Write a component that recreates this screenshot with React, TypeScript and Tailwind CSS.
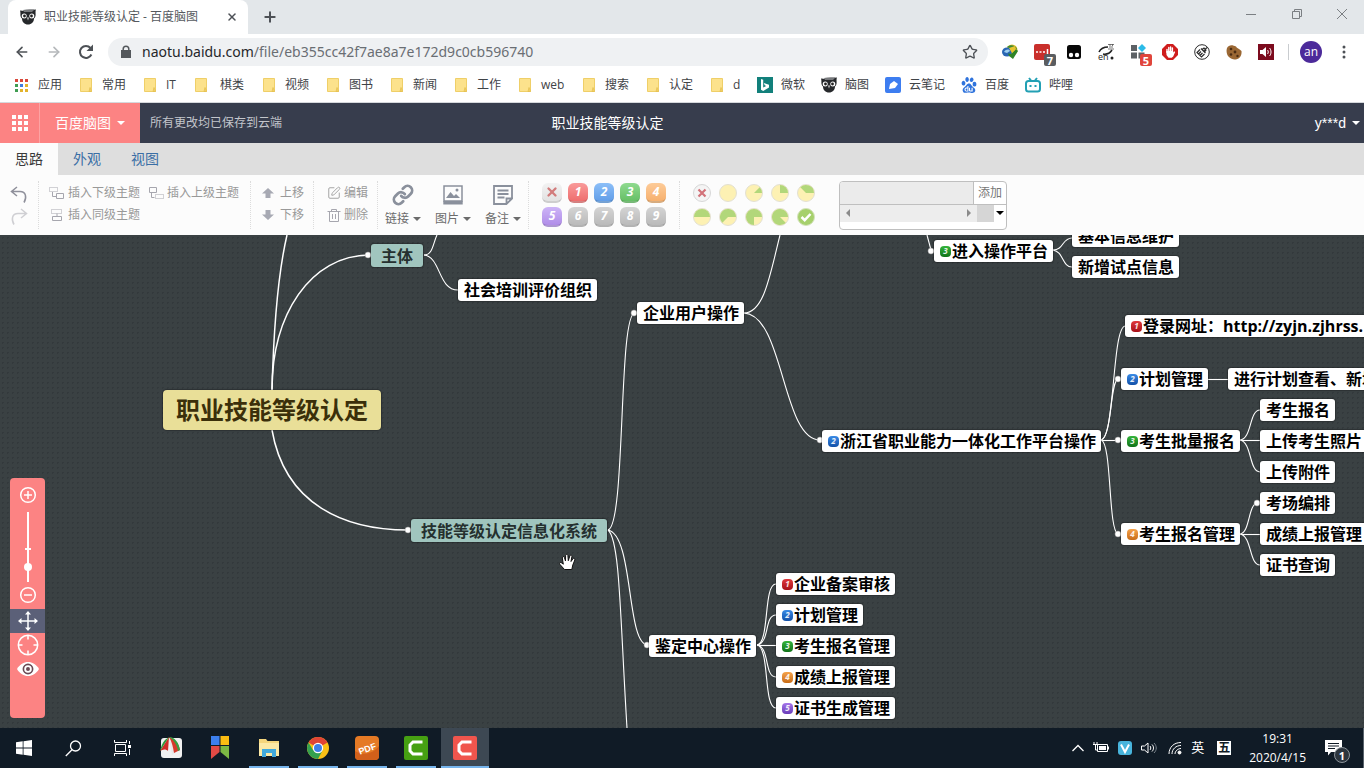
import React from "react";
import {
  ArrowLeft,
  ArrowRight,
  Plus,
  X,
  Star,
  Lock,
  Link,
  SquarePen,
} from "lucide-react";
import { SiBaidu } from "react-icons/si";

/* ---------- small shared drawings ---------- */

function Owl({ className }: { className?: string }) {
  return (
    <svg viewBox="0 0 16 16" className={className} aria-hidden="true">
      <path d="M0 1.500C3 2 5 2.200 8 1.600C11 1 13 1 16 .5C15.400 2 15.600 3 15.600 5C15.800 7 15 8.500 14 9.500C14 13 11.500 15.500 8 15.500C4.500 15.500 2 13 2 9.500C1 8.500.2 7 .4 5C.5 3.500.3 2.500 0 1.500Z" fill="#26282b" />
      <path d="M3 1C7 0 11 0 14.500.6L12 3L4 3Z" fill="#77797c" />
      <circle cx="4.200" cy="7" r="2.500" fill="#fff" />
      <circle cx="11.800" cy="7" r="2.500" fill="#fff" />
      <circle cx="4.500" cy="7" r="1.400" fill="#222" />
      <circle cx="11.500" cy="7" r="1.400" fill="#222" />
      <path d="M7 8.500h2l-1 3z" fill="#ddd" />
    </svg>
  );
}

function Folder() {
  return (
    <svg viewBox="0 0 12 14" className="h-[14px] w-3 shrink-0" aria-hidden="true">
      <path d="M.5.5h11v13H.5z" fill="#fce28c" stroke="#efcf68" />
      <path d="M9 13.500l1-4 1.500 4z" fill="#f6d56e" stroke="#e2bd4d" strokeWidth=".7" />
    </svg>
  );
}

function Caret() {
  return (
    <svg viewBox="0 0 8 4" className="h-1 w-2" aria-hidden="true">
      <path d="M0 0h8L4 4z" fill="currentColor" />
    </svg>
  );
}

/* ---------- browser chrome ---------- */

function TabStrip() {
  return (
    <div className="flex h-[34px] shrink-0 items-stretch bg-[#e3e7ea] pl-2">
      <div className="flex w-60 items-center rounded-t-lg bg-white pl-3 pr-2">
        <Owl className="h-4 w-4" />
        <span className="ml-2 flex-1 truncate text-xs text-[#55595e]">职业技能等级认定 - 百度脑图</span>
        <button aria-label="关闭标签页" className="flex h-4 w-4 items-center justify-center text-[#4d5156]">
          <X className="h-3 w-3" strokeWidth={3} />
        </button>
      </div>
      <button aria-label="新标签页" className="ml-3 flex w-5 items-center justify-center text-[#4d5156]">
        <Plus className="h-4 w-4" strokeWidth={3} />
      </button>
      <div className="ml-auto flex pb-[6px] text-[#7b7f83]">
        <button aria-label="最小化" className="flex w-[46px] items-center justify-center">
          <svg viewBox="0 0 10 10" className="h-[10px] w-[10px]"><path d="M0 5.500h10" stroke="currentColor" /></svg>
        </button>
        <button aria-label="还原" className="flex w-[46px] items-center justify-center">
          <svg viewBox="0 0 10 10" className="h-[10px] w-[10px]" fill="none" stroke="currentColor">
            <path d="M.5 2.500h7v7h-7zM2.500 2.500v-2h7v7h-2" />
          </svg>
        </button>
        <button aria-label="关闭" className="flex w-11 items-center justify-center">
          <svg viewBox="0 0 10 10" className="h-[10px] w-[10px]"><path d="M0 0l10 10M10 0L0 10" stroke="currentColor" /></svg>
        </button>
      </div>
    </div>
  );
}

function Extensions() {
  return (
    <div className="ml-[14px] flex items-center gap-4">
      <button aria-label="下载器">
        <svg viewBox="0 0 16 16" className="h-4 w-4">
          <circle cx="10" cy="6" r="5.500" fill="#e8c32e" />
          <path d="M5 3c3-3 9-2 10 2l-4 1z" fill="#3d8a35" />
          <ellipse cx="5" cy="8" rx="5" ry="4.500" fill="#2a66b4" />
          <path d="M2 8c2-3 5-3 6-1l-3 2z" fill="#9fd0ef" />
          <path d="M6 9.500l3 .500L14 5l2 2-5 8-4-3z" fill="#2f8428" />
          <path d="M7 4l6-2 1 3-4 4z" fill="#e8c32e" />
        </svg>
      </button>
      <button aria-label="密码" className="relative">
        <svg viewBox="0 0 16 16" className="h-4 w-4">
          <rect width="16" height="16" rx="2" fill="#c92f2b" />
          <path d="M2 8h2M5.500 8h2M9 8h2M13.500 5v5" stroke="#fff" strokeWidth="1.500" />
        </svg>
        <span className="absolute -right-[6px] top-[10px] flex h-3 w-3 items-center justify-center rounded-xs bg-[#5a5d60] text-[11px] font-bold leading-none text-white">7</span>
      </button>
      <button aria-label="脚本管理">
        <svg viewBox="0 0 16 16" className="h-4 w-4">
          <rect x="1" y="1" width="14" height="14" rx="2.500" fill="#080808" />
          <circle cx="5" cy="11" r="2.200" fill="#fff" />
          <circle cx="11" cy="11" r="2.200" fill="#fff" />
        </svg>
      </button>
      <button aria-label="翻译" className="relative">
        <svg viewBox="0 0 16 16" className="h-4 w-4">
          <path d="M1 8c2-4 5-5 9-5M5 10c5 1 7-1 9-4" stroke="#222" strokeWidth="1.600" fill="none" />
          <path d="M10 .5h6M12 0v2M14.500 0v2M11 3h4M10 5h6" stroke="#555" strokeWidth=".8" />
          <circle cx="14" cy="14" r="1.500" fill="#222" />
        </svg>
        <span className="absolute left-0 top-2 text-[9px] leading-[10px] text-[#222]">en</span>
      </button>
      <button aria-label="扩展管理" className="relative">
        <svg viewBox="0 0 16 16" className="h-4 w-4">
          <path d="M1 1h6v6H1zM1 8.500h6v6H1zM8.500 8.500h6v6h-6z" fill="#5d6165" />
          <path d="M12 0l4 4-4 4-4-4z" fill="#2bbbe8" />
        </svg>
        <span className="absolute -right-[6px] top-[10px] flex h-3 w-3 items-center justify-center rounded-xs bg-[#e0453c] text-[11px] font-bold leading-none text-white">5</span>
      </button>
      <button aria-label="广告拦截">
        <svg viewBox="0 0 16 16" className="h-4 w-4">
          <path d="M5 0h6l5 5v6l-5 5H5l-5-5V5z" fill="#cf1d1d" />
          <path d="M5 8.500V5.500M6.800 8V3.500M8.600 8V3M10.400 8V4" stroke="#fff" strokeWidth="1.400" strokeLinecap="round" />
          <path d="M4.300 7h6.800l.3 1.500 1-1.200.8.700-2 4.500-1.500 1.200H6.500L4.500 11z" fill="#fff" />
        </svg>
      </button>
      <button aria-label="清理">
        <svg viewBox="0 0 16 16" className="h-4 w-4" fill="none" stroke="#2c2c2c">
          <circle cx="8" cy="8" r="7.300" />
          <path d="M13 3.500L10 6.500M7 4.500l4.500 4.500M6 5.500l-3 3 4.500 4.500 3-3M4.500 10l2.500-2.500M6 11.500l2.500-2.500M8 5.500l2-1.500 2 2-1.500 2" strokeWidth="1.200" />
        </svg>
      </button>
      <button aria-label="Cookie">
        <svg viewBox="0 0 16 16" className="h-4 w-4">
          <path d="M1 4C3 0 7 1 10 2.500c1 2 3 2 5.500 4.500.5 5-2 8-6 8.500C4 16-1 11 1 4z" fill="#9a6733" />
          <circle cx="5" cy="5" r="1.300" fill="#4a2c12" />
          <circle cx="9" cy="8" r="1.400" fill="#4a2c12" />
          <circle cx="5" cy="10.500" r="1.300" fill="#4a2c12" />
          <circle cx="11.500" cy="12" r="1.200" fill="#4a2c12" />
        </svg>
      </button>
      <button aria-label="音量">
        <svg viewBox="0 0 16 16" className="h-4 w-4">
          <path d="M0 0h16v16H0z" fill="#7c0b1e" />
          <path d="M2 6h2.500L8 3v10L4.500 10H2z" fill="#fff" />
          <path d="M9.500 6c1 1 1 3 0 4M11.500 4c2 2 2 6 0 8" stroke="#fff" fill="none" />
        </svg>
      </button>
    </div>
  );
}

function AddressBar() {
  return (
    <div className="flex h-9 shrink-0 items-center bg-white pl-[14px] pr-[18px]">
      <button aria-label="后退" className="text-[#4d5156]"><ArrowLeft className="h-4 w-4" strokeWidth={2.5} /></button>
      <button aria-label="前进" className="ml-4 text-[#b5b8bb]"><ArrowRight className="h-4 w-4" strokeWidth={2.5} /></button>
      <button aria-label="刷新" className="ml-4 text-[#4d5156]">
        <svg viewBox="0 0 16 16" className="h-4 w-4" fill="none">
          <path d="M13.400 10.500A6 6 0 1 1 12.500 4" stroke="currentColor" strokeWidth="2" />
          <path d="M15 .5v6.500H8.500z" fill="currentColor" />
        </svg>
      </button>
      <div className="ml-[14px] flex h-7 flex-1 items-center rounded-full bg-[#eff1f3] pl-3 pr-[10px]">
        <svg viewBox="0 0 12 14" className="h-[14px] w-3" aria-hidden="true">
          <path d="M1 5h10v8H1z" fill="#54585c" />
          <path d="M3.200 5.500V4a2.800 2.800 0 0 1 5.600 0v1.500" fill="none" stroke="#54585c" strokeWidth="1.500" />
        </svg>
        <div className="ml-[10px] flex-1 font-['Noto_Sans',sans-serif] text-sm text-[#6a6e73]">
          <span className="text-[#25272a]">naotu.baidu.com</span>/file/eb355cc42f7ae8a7e172d9c0cb596740
        </div>
        <button aria-label="收藏" className="text-[#4d5156]"><Star className="h-4 w-4" strokeWidth={2} /></button>
      </div>
      <Extensions />
      <div className="ml-[14px] h-4 w-px bg-[#c9cccf]" />
      <button aria-label="账户" className="ml-[11px] flex h-[22px] w-[22px] items-center justify-center rounded-full bg-[#4c2a9a] text-xs text-white">an</button>
      <button aria-label="菜单" className="ml-5 text-[#4d5156]">
        <svg viewBox="0 0 4 14" className="h-[14px] w-1" fill="currentColor">
          <circle cx="2" cy="2" r="1.500" /><circle cx="2" cy="7" r="1.500" /><circle cx="2" cy="12" r="1.500" />
        </svg>
      </button>
    </div>
  );
}

const APP_DOTS = ["#d9483b", "#d9483b", "#d9483b", "#3f9d52", "#3f7de0", "#e3b32c", "#3f9d52", "#e3b32c", "#e3b32c"];

function AppsIcon() {
  return (
    <svg viewBox="0 0 13 13" className="h-[13px] w-[13px]" aria-hidden="true">
      {APP_DOTS.map((c, i) => (
        <rect key={i} x={(i % 3) * 5} y={Math.floor(i / 3) * 5} width="3" height="3" fill={c} />
      ))}
    </svg>
  );
}

function Bookmark({ icon, label, width, gap }: { icon: React.ReactNode; label: string; width: string; gap: string }) {
  return (
    <a href="#" className={`flex shrink-0 items-center text-xs text-[#3f4347] ${width} ${gap}`}>
      {icon}
      {label}
    </a>
  );
}

function BookmarkBar() {
  return (
    <nav className="flex h-[33px] shrink-0 items-center border-b border-[#d5d8dc] bg-white pl-[15px] pb-[2px]">
      <Bookmark icon={<AppsIcon />} label="应用" width="w-[65px]" gap="gap-[10px]" />
      <Bookmark icon={<Folder />} label="常用" width="w-16" gap="gap-[10px]" />
      <Bookmark icon={<Folder />} label="IT" width="w-[51px]" gap="gap-[10px]" />
      <Bookmark icon={<Folder />} label="棋类" width="w-[68px]" gap="gap-[13px]" />
      {["视频", "图书", "新闻", "工作", "web", "搜索", "认定"].map((t) => (
        <Bookmark key={t} icon={<Folder />} label={t} width="w-16" gap="gap-[10px]" />
      ))}
      <Bookmark icon={<Folder />} label="d" width="w-[46px]" gap="gap-[10px]" />
      <Bookmark
        label="微软"
        width="w-16"
        gap="gap-2"
        icon={
          <svg viewBox="0 0 16 16" className="h-4 w-4">
            <path d="M0 0h16v16H0z" fill="#12807b" />
            <path d="M4 2l2.200.8v7.800l3-1.700-1.500-.7-.9-2.300 5.200 1.900v2.600L6.200 14 4 12.700z" fill="#fff" />
          </svg>
        }
      />
      <Bookmark icon={<Owl className="h-4 w-4" />} label="脑图" width="w-16" gap="gap-2" />
      <Bookmark
        label="云笔记"
        width="w-[76px]"
        gap="gap-2"
        icon={
          <svg viewBox="0 0 16 16" className="h-4 w-4">
            <rect width="16" height="16" rx="2" fill="#3d7df0" />
            <path d="M4 12l1-5 4-3 4 3-3 4z" fill="#fff" />
          </svg>
        }
      />
      <Bookmark icon={<SiBaidu className="h-4 w-4 text-[#2f73dc]" />} label="百度" width="w-16" gap="gap-2" />
      <Bookmark
        label="哔哩"
        width="w-16"
        gap="gap-2"
        icon={
          <svg viewBox="0 0 16 16" className="h-4 w-4" fill="none" stroke="#23a0b4" strokeWidth="2">
            <rect x="1" y="4" width="14" height="10.500" rx="2.500" />
            <path d="M4 1l2 2.500M12 1l-2 2.500M5.500 8v2M10.500 8v2" />
          </svg>
        }
      />
    </nav>
  );
}

/* ---------- application header ---------- */

function AppHeader() {
  return (
    <header className="grid h-10 shrink-0 grid-cols-[1fr_auto_1fr_149px] items-stretch bg-[#373d4d] text-white">
      <div className="flex items-stretch">
        <button aria-label="应用列表" className="flex w-10 items-center justify-center border-r border-[#fda3a3] bg-[#fc8383]">
          <svg viewBox="0 0 16 16" className="h-4 w-4" fill="#fff">
            {[0, 1, 2].map((r) => [0, 1, 2].map((c) => <rect key={`${r}${c}`} x={c * 6} y={r * 6} width="4" height="4" />))}
          </svg>
        </button>
        <button className="flex w-[100px] items-center justify-center gap-[6px] bg-[#fc8383] text-sm">
          百度脑图 <Caret />
        </button>
        <span className="flex items-center pl-[10px] text-xs text-[#c3c6cc]">所有更改均已保存到云端</span>
      </div>
      <h1 className="flex items-center text-sm">职业技能等级认定</h1>
      <div />
      <div className="flex items-center justify-end pr-1">
        <button className="flex items-center gap-[6px] font-['Liberation_Sans',sans-serif] text-sm">y***d <Caret /></button>
      </div>
    </header>
  );
}

function ModeTabs() {
  return (
    <nav className="flex h-8 shrink-0 bg-[#dedede] text-sm text-[#3a6ea5]">
      <a href="#" className="flex w-[58px] items-center justify-center bg-[#fcfcfc] text-[#3a3a3a]">思路</a>
      <a href="#" className="flex w-[58px] items-center justify-center">外观</a>
      <a href="#" className="flex w-[58px] items-center justify-center">视图</a>
    </nav>
  );
}

/* ---------- ribbon ---------- */

const LEVEL_SOLID = {
  child: "M7.500 7.500h7v5h-7zM3.500 6v4.500h4",
  parent: "M1.500 1.500h7v5h-7zM3.500 7v4.500h3",
  sibling: "M3.500 8.500h9v4h-9zM8 5.500v3",
};
const LEVEL_DASHED = { child: "M.5 1.500h8v4h-8z", parent: "M7.500 8.500h8v4h-8z", sibling: "M2.500 1.500h10v4h-10z" };

function LevelButton({ kind, label }: { kind: "child" | "parent" | "sibling"; label: string }) {
  return (
    <button className="flex h-[22px] items-center gap-[3px] text-xs text-[#999]">
      <svg viewBox="0 0 16 14" className="h-[14px] w-4" fill="none" stroke="#a6a6ae">
        <path d={LEVEL_SOLID[kind]} />
        <path d={LEVEL_DASHED[kind]} strokeDasharray="1 1" />
      </svg>
      {label}
    </button>
  );
}

function MoveButton({ up, label }: { up?: boolean; label: string }) {
  return (
    <button className="flex h-[22px] items-center gap-[6px] text-xs text-[#999]">
      <svg viewBox="0 0 12 12" className="h-3 w-3" fill="#a7a9b3">
        <path d={up ? "M6 1l6 5.500H8.500V11h-5V6.500H0z" : "M6 11l6-5.500H8.500V1h-5v4.500H0z"} />
      </svg>
      {label}
    </button>
  );
}

function BigButton({ label, children }: { label: string; children: React.ReactNode }) {
  return (
    <button className="flex w-[50px] flex-col items-center gap-1 pt-1 text-xs text-[#6b6b6b]">
      <span className="flex h-6 items-center text-[#8a909c]">{children}</span>
      <span className="flex items-center gap-1">{label} <Caret /></span>
    </button>
  );
}

const PRIORITY = [
  "from-[#f3f3f3] to-[#e2e2e2] text-[#d27c7c]",
  "from-[#f99a9a] to-[#ee6e6e] text-white",
  "from-[#8cbff8] to-[#629ee8] text-white",
  "from-[#8fda8f] to-[#66bf66] text-white",
  "from-[#fdcb98] to-[#f6b06e] text-white",
  "from-[#cdb4f7] to-[#b08de8] text-white",
  "from-[#d4d4d4] to-[#bababa] text-white",
  "from-[#d4d4d4] to-[#bababa] text-white",
  "from-[#d4d4d4] to-[#bababa] text-white",
  "from-[#d4d4d4] to-[#bababa] text-white",
];

function PriorityGrid() {
  return (
    <div className="grid grid-cols-5 gap-x-[6px] gap-y-1">
      {PRIORITY.map((tone, i) => (
        <button
          key={i}
          aria-label={i ? `优先级 ${i}` : "移除优先级"}
          className={`flex h-5 w-5 items-center justify-center rounded-md border-b-2 border-black/15 bg-linear-to-b text-xs font-bold italic ${tone}`}
        >
          {i ? i : <X className="h-[14px] w-[14px]" strokeWidth={4} />}
        </button>
      ))}
    </div>
  );
}

/* A clockwise slice that covers `fraction` of the dial and ends at three o'clock. */
function slice(fraction: number) {
  const start = Math.PI / 2 - fraction * Math.PI * 2;
  const x = 10 + 8 * Math.sin(start);
  const y = 10 - 8 * Math.cos(start);
  return `M10 10L${x} ${y}A8 8 0 ${fraction > 0.5 ? 1 : 0} 1 18 10Z`;
}

function ProgressGrid() {
  return (
    <div className="grid grid-cols-5 gap-x-[6px] gap-y-1">
      <button aria-label="移除进度">
        <svg viewBox="0 0 20 20" className="h-5 w-5">
          <circle cx="10" cy="10" r="8.500" fill="#f4f4f4" stroke="#d7d7d7" />
          <path d="M6.500 6.500l7 7M13.500 6.500l-7 7" stroke="#d27279" strokeWidth="2.200" />
        </svg>
      </button>
      {[0, 1, 2, 3, 4, 5, 6, 7].map((n) => (
        <button key={n} aria-label={`进度 ${n}/8`}>
          <svg viewBox="0 0 20 20" className="h-5 w-5">
            <circle cx="10" cy="10" r="8.500" fill="#fdf1b3" stroke="#e3e0d2" />
            {n > 0 && <path d={slice(n / 8)} fill="#b2d77a" />}
          </svg>
        </button>
      ))}
      <button aria-label="已完成">
        <svg viewBox="0 0 20 20" className="h-5 w-5">
          <circle cx="10" cy="10" r="8.500" fill="#a6d06c" stroke="#d5e3bd" />
          <path d="M5.500 10l3.200 3.200L14.500 7" stroke="#fff" strokeWidth="2.500" fill="none" />
        </svg>
      </button>
    </div>
  );
}

function ResourceBox() {
  return (
    <div className="w-[168px] overflow-hidden rounded-sm border border-[#bfbfbf] bg-white">
      <div className="flex h-[23px] border-b border-[#bfbfbf]">
        <input aria-label="资源标签" className="w-[134px] border-r border-[#bfbfbf] bg-[#ebebeb] px-1 text-xs" />
        <button className="flex-1 text-xs text-[#777]">添加</button>
      </div>
      <div className="flex h-[17px]">
        <div className="flex flex-1 items-center justify-between bg-[#ededed] px-[6px] text-[#8b8b8b]">
          <svg viewBox="0 0 4 8" className="h-2 w-1" fill="currentColor"><path d="M4 0v8L0 4z" /></svg>
          <svg viewBox="0 0 4 8" className="h-2 w-1" fill="currentColor"><path d="M0 0v8l4-4z" /></svg>
        </div>
        <div className="w-[17px] bg-[#d6d6d6]" />
        <button aria-label="更多资源" className="flex w-3 items-center justify-center text-black"><Caret /></button>
      </div>
      <div className="h-[7px]" />
    </div>
  );
}

function Divider() {
  return <div className="my-[6px] border-l border-dotted border-[#dcdcdc]" />;
}

function Ribbon() {
  return (
    <div className="flex h-[60px] shrink-0 bg-[#fcfcfc]">
      <div className="flex w-[38px] flex-col items-center justify-center gap-[2px] pt-[2px] text-[#8f909b]">
        <button aria-label="撤销">
          <svg viewBox="0 0 18 20" className="h-5 w-[18px]" fill="none" stroke="currentColor" strokeWidth="1.500">
            <path d="M7 2L1.500 6.500 7 11M1.500 6.500H10c6 0 7 6 4 11" />
          </svg>
        </button>
        <button aria-label="重做" className="text-[#cfcfd3]">
          <svg viewBox="0 0 18 20" className="h-5 w-[18px]" fill="none" stroke="currentColor" strokeWidth="1.500">
            <path d="M11 2l5.500 4.500L11 11M16.500 6.500H8c-6 0-7 6-4 11" />
          </svg>
        </button>
      </div>
      <Divider />
      <div className="flex w-[211px] flex-col justify-center pl-[10px] pb-[2px]">
        <div className="flex gap-2">
          <LevelButton kind="child" label="插入下级主题" />
          <LevelButton kind="parent" label="插入上级主题" />
        </div>
        <LevelButton kind="sibling" label="插入同级主题" />
      </div>
      <Divider />
      <div className="flex w-[62px] flex-col justify-center pl-[11px] pb-[2px]">
        <MoveButton up label="上移" />
        <MoveButton label="下移" />
      </div>
      <Divider />
      <div className="flex w-[63px] flex-col justify-center pl-[13px] pb-[2px] text-xs text-[#999]">
        <button className="flex h-[22px] items-center gap-[3px]"><SquarePen className="h-[14px] w-[14px]" strokeWidth={1.5} />编辑</button>
        <button className="flex h-[22px] items-center gap-[3px]">
          <svg viewBox="0 0 14 14" className="h-[14px] w-[14px]" fill="none" stroke="#a6a6ae">
            <path d="M.5 3.500h13M4.500 3.500v-2h5v2M2.500 3.500v10h9v-10M5.500 6v5M8.500 6v5" />
          </svg>
          删除
        </button>
      </div>
      <Divider />
      <div className="flex w-[150px] pt-1">
        <BigButton label="链接"><Link className="h-[22px] w-[22px]" strokeWidth={3} /></BigButton>
        <BigButton label="图片">
          <svg viewBox="0 0 20 20" className="h-5 w-5">
            <path d="M1 1h18v15H1z" fill="none" stroke="currentColor" strokeWidth="1.500" />
            <path d="M.3 16h19.400v3.500H.3zM3 13l4.500-6 3.500 4 2-2 4 4z" fill="currentColor" />
            <circle cx="14" cy="5" r="1.500" fill="currentColor" />
          </svg>
        </BigButton>
        <BigButton label="备注">
          <svg viewBox="0 0 20 20" className="h-5 w-5" fill="none" stroke="currentColor" strokeWidth="2">
            <path d="M19 14V1H1v18h13M19 13.500L13.500 19v-5.500z" strokeWidth="1.800" />
            <path d="M4.500 5.500h11M4.500 9h11M4.500 12.500h7" />
          </svg>
        </BigButton>
      </div>
      <Divider />
      <div className="flex w-[150px] items-center pl-[13px]"><PriorityGrid /></div>
      <Divider />
      <div className="flex w-[147px] items-center pl-[12px]"><ProgressGrid /></div>
      <div className="flex items-center pl-[12px]"><ResourceBox /></div>
    </div>
  );
}

/* ---------- mind map ---------- */

type MapNode = { x: number; y: number; text: string; mark?: number; kind?: "root" | "main"; wide?: boolean };

const NODES: MapNode[] = [
  { x: 163, y: 155, text: "职业技能等级认定", kind: "root" },
  { x: 371, y: 9, text: "主体", kind: "main" },
  { x: 411, y: 284, text: "技能等级认定信息化系统", kind: "main" },
  { x: 458, y: 44, text: "社会培训评价组织" },
  { x: 637, y: 67, text: "企业用户操作" },
  { x: 649, y: 400, text: "鉴定中心操作" },
  { x: 822, y: 195, text: "浙江省职业能力一体化工作平台操作", mark: 2 },
  { x: 934, y: 5, text: "进入操作平台", mark: 3 },
  { x: 1072, y: -10, text: "基本信息维护" },
  { x: 1072, y: 21, text: "新增试点信息" },
  { x: 1125, y: 80, text: "登录网址：http://zyjn.zjhrss.", mark: 1, wide: true },
  { x: 1121, y: 133, text: "计划管理", mark: 2 },
  { x: 1228, y: 133, text: "进行计划查看、新增", wide: true },
  { x: 1121, y: 195, text: "考生批量报名", mark: 3 },
  { x: 1121, y: 288, text: "考生报名管理", mark: 4 },
  { x: 1260, y: 164, text: "考生报名" },
  { x: 1260, y: 195, text: "上传考生照片" },
  { x: 1260, y: 226, text: "上传附件" },
  { x: 1260, y: 257, text: "考场编排" },
  { x: 1260, y: 288, text: "成绩上报管理" },
  { x: 1260, y: 319, text: "证书查询" },
  { x: 776, y: 338, text: "企业备案审核", mark: 1 },
  { x: 776, y: 369, text: "计划管理", mark: 2 },
  { x: 776, y: 400, text: "考生报名管理", mark: 3 },
  { x: 776, y: 431, text: "成绩上报管理", mark: 4 },
  { x: 776, y: 462, text: "证书生成管理", mark: 5 },
];

const MARK_TONE = [
  "",
  "from-[#e0383c] to-[#a80f18]",
  "from-[#3a8be6] to-[#1250a8]",
  "from-[#35b53c] to-[#107218]",
  "from-[#f5a34a] to-[#c86c14]",
  "from-[#a676ea] to-[#6a3cb8]",
];

const NODE_STYLE = {
  root: "h-10 px-[13px] text-2xl bg-[#e9df98] text-[#3b2f0a] rounded-sm",
  main: "h-[23px] px-[10px] text-base bg-[#a0c5be] text-[#25302f] rounded-[3px]",
  leaf: "h-[22px] pl-[6px] pr-[5px] text-base bg-white text-black rounded-[3px]",
};

const THICK = [
  "M272 155C274 80 280 30 287 0",
  "M272 155C272 80 310 20 370 20",
  "M272 195C285 270 345 295 408 295",
];

const THIN = [
  "M424 20C433 20 433 8 437 0",
  "M424 20C441 22 438 55 458 55",
  "M608 295C626 290 618 78 635 78",
  "M608 295C634 300 626 410 648 410",
  "M608 295C620 305 620 380 627 493",
  "M744 78C764 78 770 40 780 0",
  "M744 78C784 80 782 205 820 205",
  "M927 0L931 15",
  "M1053 15C1064 15 1062 3 1072 3",
  "M1053 15C1064 17 1062 32 1072 32",
  "M1101 205C1115 203 1112 93 1125 91",
  "M1101 205C1112 203 1110 146 1118 144",
  "M1101 205.500H1118",
  "M1101 205C1112 207 1108 296 1118 299",
  "M1208 144.500H1228",
  "M1240 205C1252 204 1249 175 1260 175",
  "M1240 205.500H1260",
  "M1240 205C1252 207 1249 237 1260 237",
  "M1240 299C1250 298 1248 270 1257 268",
  "M1240 299.500H1260",
  "M1240 299C1252 301 1249 330 1260 330",
  "M757 410C770 408 763 349 776 349",
  "M757 410C770 408 764 380 776 380",
  "M757 410.500H776",
  "M757 410C770 412 764 442 776 442",
  "M757 410C770 412 763 473 776 473",
];

const DOTS = [
  [368, 20], [408, 295], [634, 78], [647, 410], [820, 205], [931, 16],
  [1118, 144], [1118, 205], [1118, 299], [1257, 268],
];

function NodeBox({ node }: { node: MapNode }) {
  return (
    <div
      className={`absolute flex items-center gap-px whitespace-nowrap font-bold shadow-[0_0_1px_1px_rgba(0,0,0,0.25)] ${NODE_STYLE[node.kind ?? "leaf"]} ${node.wide ? "min-w-60" : ""}`}
      style={{ left: node.x, top: node.y }}
    >
      {node.mark && (
        <span className={`flex h-[11px] w-[11px] items-center justify-center rounded-sm bg-linear-to-b text-[8px] italic leading-none text-white/90 ${MARK_TONE[node.mark]}`}>
          {node.mark}
        </span>
      )}
      <span>{node.text}</span>
    </div>
  );
}

function ZoomPanel() {
  return (
    <div className="absolute left-[10px] top-[243px] flex h-60 w-[35px] flex-col items-center rounded-sm bg-[#fc8383] pt-2 text-white">
      <button aria-label="放大" className="h-[18px]">
        <svg viewBox="0 0 18 18" className="h-[18px] w-[18px]" fill="none" stroke="currentColor" strokeWidth="1.500">
          <circle cx="9" cy="9" r="7.300" /><path d="M5 9h8M9 5v8" />
        </svg>
      </button>
      <svg viewBox="0 0 10 72" className="mt-2 h-[72px] w-[10px]" fill="currentColor" role="img" aria-label="缩放比例">
        <path d="M4 0h2v70H4zM2 36h6v2H2z" /><circle cx="5" cy="55" r="4" />
      </svg>
      <button aria-label="缩小" className="mt-[2px] h-[18px]">
        <svg viewBox="0 0 18 18" className="h-[18px] w-[18px]" fill="none" stroke="currentColor" strokeWidth="1.500">
          <circle cx="9" cy="9" r="7.300" /><path d="M5 9h8" />
        </svg>
      </button>
      <button aria-label="拖动画布" className="mt-[5px] flex h-6 w-full items-center justify-center bg-[#5b6078]">
        <svg viewBox="0 0 20 20" className="h-5 w-5" fill="none" stroke="currentColor" strokeWidth="1.500">
          <path d="M10 1v18M1 10h18" />
          <path d="M10 0l3 3.500H7zM10 20l3-3.500H7zM0 10l3.500-3v6zM20 10l-3.500-3v6z" fill="currentColor" stroke="none" />
        </svg>
      </button>
      <button aria-label="定位中心" className="mt-px">
        <svg viewBox="0 0 20 20" className="h-[22px] w-[22px]" fill="none" stroke="currentColor" strokeWidth="1.400">
          <circle cx="10" cy="10" r="8.800" /><path d="M10 1v4M10 15v4M1 10h4M15 10h4" />
        </svg>
      </button>
      <button aria-label="预览" className="mt-[2px]">
        <svg viewBox="0 0 20 20" className="h-[22px] w-[22px]">
          <path d="M0 10C5 1.500 15 1.500 20 10 15 18.500 5 18.500 0 10z" fill="#fff" />
          <circle cx="10" cy="10" r="4.200" fill="#fff" stroke="#6b4a55" strokeWidth="1.500" />
          <circle cx="10" cy="10" r="1.800" fill="#6b4a55" />
        </svg>
      </button>
    </div>
  );
}

function HandCursor() {
  return (
    <svg viewBox="0 0 18 18" className="absolute left-[559px] top-[318px] h-[18px] w-[18px]" aria-hidden="true">
      <path
        d="M5.500 16.500L1 11.500C-.3 9.800 1.300 8.800 2.800 10l1.500 1.200L3.300 5C3 3.200 4.900 2.900 5.400 4.500L6.500 8 6.600 2.500C6.700.9 8.700.9 8.900 2.500L9.300 7.700 10.800 3C11.300 1.500 13.200 2 12.900 3.600L12 8.500l1.900-2.700c1-1.300 2.500-.3 1.900 1.200L13.800 12l-1 4.500z"
        fill="#fff"
        stroke="#111"
        strokeWidth="1"
      />
    </svg>
  );
}

function MindMap() {
  return (
    <main className="relative min-h-0 flex-1 overflow-hidden bg-[#3a4143] bg-[radial-gradient(circle,#33393c_1px,transparent_1px)] bg-[size:5px_5px]">
      <svg className="absolute inset-0 h-full w-full" fill="none" stroke="#fff" aria-hidden="true">
        {THICK.map((d) => <path key={d} d={d} strokeWidth="1.500" />)}
        {THIN.map((d) => <path key={d} d={d} strokeWidth="1.100" />)}
        {DOTS.map(([x, y]) => <circle key={`${x}-${y}`} cx={x} cy={y} r="3" fill="#fff" stroke="#999" strokeWidth=".5" />)}
      </svg>
      {NODES.map((n) => <NodeBox key={`${n.x}-${n.y}`} node={n} />)}
      <ZoomPanel />
      <HandCursor />
    </main>
  );
}

/* ---------- taskbar ---------- */

function TaskItem({ label, open, active, children }: { label: string; open?: boolean; active?: boolean; children: React.ReactNode }) {
  return (
    <button aria-label={label} className={`flex w-12 flex-col items-center justify-between ${active ? "bg-[#3d4853]" : ""}`}>
      <span className="flex flex-1 items-center pt-[2px]">{children}</span>
      <span className={`h-[2px] ${active ? "w-full" : "w-10"} ${open ? "bg-[#76b4ec]" : ""}`} />
    </button>
  );
}

function Taskbar() {
  return (
    <footer className="flex h-10 shrink-0 items-stretch bg-[#101b26] text-white">
      <div className="flex gap-px">
        <TaskItem label="开始">
          <svg viewBox="0 0 16 16" className="h-4 w-4" fill="#fff"><path d="M0 2.300l6.700-1v6.300H0zM7.500 1.200L16 0v7.600H7.500zM0 8.400h6.700v6.300L0 13.700zM7.500 8.400H16V16l-8.500-1.200z" /></svg>
        </TaskItem>
        <TaskItem label="搜索">
          <svg viewBox="0 0 17 17" className="h-[17px] w-[17px]" fill="none" stroke="#fff" strokeWidth="1.300"><circle cx="10.500" cy="6" r="5" /><path d="M7 9.700L.8 16" /></svg>
        </TaskItem>
        <TaskItem label="任务视图">
          <svg viewBox="0 0 17 16" className="h-4 w-[17px]" fill="none" stroke="#fff"><path d="M.5 0v2.500h12V0M1.500 4.500h10v7h-10zM.5 16v-2.500h12V16M15.500 1v3M15.500 9v6" /><path d="M14 5h3v3h-3z" fill="#fff" stroke="none" /></svg>
        </TaskItem>
        <TaskItem label="录屏工具">
          <svg viewBox="0 0 22 22" className="h-[22px] w-[22px]">
            <rect x="1" y="1" width="21" height="20" rx="3" fill="#f1f1f1" />
            <path d="M9 0L0 14c3-2 6-2 8 0z" fill="#cf2e26" />
            <path d="M9 0L5 3C2 6 1 10 0 14z" fill="#2f9a3a" />
            <path d="M9 1c1 6 2 12 3 17l4-3z" fill="#e9e9e9" />
            <path d="M9 0c3 5 4 10 5 16l6-3C19 7 15 2 9 0z" fill="#d63a2c" />
            <path d="M9 0c6 0 10 6 11 13l-2 1C17 8 14 3 9 0z" fill="#36a043" />
          </svg>
        </TaskItem>
        <TaskItem label="书签工具">
          <svg viewBox="0 0 18 24" className="h-6 w-[18px]"><path d="M0 0h8.500v9H0z" fill="#3d80ee" /><path d="M9.500 0H18v9H9.500z" fill="#fbbc12" /><path d="M0 10h8.500v6L0 23z" fill="#e24a45" /><path d="M9.500 10H18v13l-8.500-7z" fill="#7cb844" /></svg>
        </TaskItem>
        <TaskItem label="文件资源管理器" open>
          <svg viewBox="0 0 22 20" className="h-5 w-[22px]"><path d="M1 1h7l1.500 2H21v15H1z" fill="#f5d67c" /><path d="M1 5h20v13H1z" fill="#fce9a5" /><path d="M4 11h14v8h-4v-4H8v4H4z" fill="#41a9dc" /></svg>
        </TaskItem>
        <TaskItem label="Chrome" open>
          <svg viewBox="0 0 22 22" className="h-[22px] w-[22px]">
            <circle cx="11" cy="11" r="11" fill="#fbc116" />
            <path d="M11 11L1.500 5.500A11 11 0 0 1 20.500 5.500z" fill="#e04436" />
            <path d="M1.500 5.500A11 11 0 0 0 11 22l4.500-8.500L6 13z" fill="#34a04f" />
            <circle cx="11" cy="11" r="5.200" fill="#fff" /><circle cx="11" cy="11" r="4" fill="#3f7fe8" />
          </svg>
        </TaskItem>
        <TaskItem label="PDF 编辑器" open>
          <svg viewBox="0 0 24 24" className="h-6 w-6"><rect width="24" height="24" rx="4" fill="#e57a25" /><path d="M0 15C8 20 18 18 24 10v10a4 4 0 0 1-4 4H4a4 4 0 0 1-4-4z" fill="#d2601a" /><text x="3" y="16" fontSize="9" fontWeight="bold" fontFamily="Liberation Sans, sans-serif" fill="#fff" transform="rotate(-20 12 12)">PDF</text></svg>
        </TaskItem>
        <TaskItem label="Camtasia" open>
          <svg viewBox="0 0 24 24" className="h-6 w-6"><rect width="24" height="24" rx="2" fill="#46a012" /><path d="M18.500 6H9L6 9v6l3 3h9.500" fill="none" stroke="#fff" strokeWidth="3" /></svg>
        </TaskItem>
        <TaskItem label="Camtasia 录制器" open active>
          <svg viewBox="0 0 24 24" className="h-6 w-6"><rect width="24" height="24" rx="2" fill="#f0554d" /><path d="M18.500 6H9L6 9v6l3 3h9.500" fill="none" stroke="#fff" strokeWidth="3" /></svg>
        </TaskItem>
      </div>
      <div className="ml-auto flex items-center">
        <div className="flex items-center gap-[9px]">
          <svg viewBox="0 0 12 8" className="h-2 w-3" fill="none" stroke="#fff" strokeWidth="1.300"><path d="M.5 7L6 1.500 11.500 7" /></svg>
          <svg viewBox="0 0 16 12" className="h-3 w-4" fill="none" stroke="#fff"><path d="M4.500 2.500h10v7h-10zM15.500 4.500v3M1 0v2M4 0v2M0 2.500h5M2.500 3v5h2" /><path d="M6 4h7v4H6z" fill="#fff" stroke="none" /></svg>
          <svg viewBox="0 0 14 14" className="h-[14px] w-[14px]"><rect width="14" height="14" rx="3" fill="#48b4dc" /><path d="M3 3.500l4 7.500 4-7.500" stroke="#fff" strokeWidth="2" fill="none" /></svg>
          <svg viewBox="0 0 16 14" className="h-[14px] w-4" fill="none" stroke="#fff"><path d="M.5 5h3L7 2v10L3.500 9h-3zM9 5c1 1 1 3 0 4M11 3.500c2 2 2 5 0 7" /><path d="M13 2c3 3 3 7 0 10" stroke="#7c858d" /></svg>
          <svg viewBox="0 0 14 14" className="ml-[2px] h-[14px] w-[14px]" fill="none" stroke="#fff"><path d="M1 13C1 6 6 1.500 13 1.500M4 13c0-5 4-8.500 9-8.500M7 13c0-3 3-5.500 6-5.500" /><circle cx="11.500" cy="11.500" r="1.500" fill="#fff" /></svg>
          <span className="text-[13px]">英</span>
          <span className="ml-1 flex h-[14px] w-[14px] items-center justify-center bg-white text-xs font-bold leading-none text-[#101b26]">五</span>
        </div>
        <div className="ml-[18px] text-center text-xs leading-[19px]">
          <div>19:31</div>
          <div>2020/4/15</div>
        </div>
        <button aria-label="通知" className="relative ml-[19px] mr-[21px]">
          <svg viewBox="0 0 17 16" className="h-4 w-[17px]"><path d="M0 0h17v12H6l-3 3.500V12H0z" fill="#fff" /><path d="M3 3.500h11M3 6h11M3 8.500h7" stroke="#101b26" /></svg>
          <span className="absolute -right-2 top-[7px] flex h-4 w-4 items-center justify-center rounded-full border border-[#8c949b] bg-[#2c353e] text-[11px] font-bold leading-none">1</span>
        </button>
        <div className="h-full w-px bg-[#59636c]" />
      </div>
    </footer>
  );
}

export default function App() {
  return (
    <div className="flex h-screen flex-col overflow-hidden bg-white font-['Open_Sans','Noto_Sans_CJK_SC',sans-serif]">
      <TabStrip />
      <AddressBar />
      <BookmarkBar />
      <AppHeader />
      <ModeTabs />
      <Ribbon />
      <MindMap />
      <Taskbar />
    </div>
  );
}
